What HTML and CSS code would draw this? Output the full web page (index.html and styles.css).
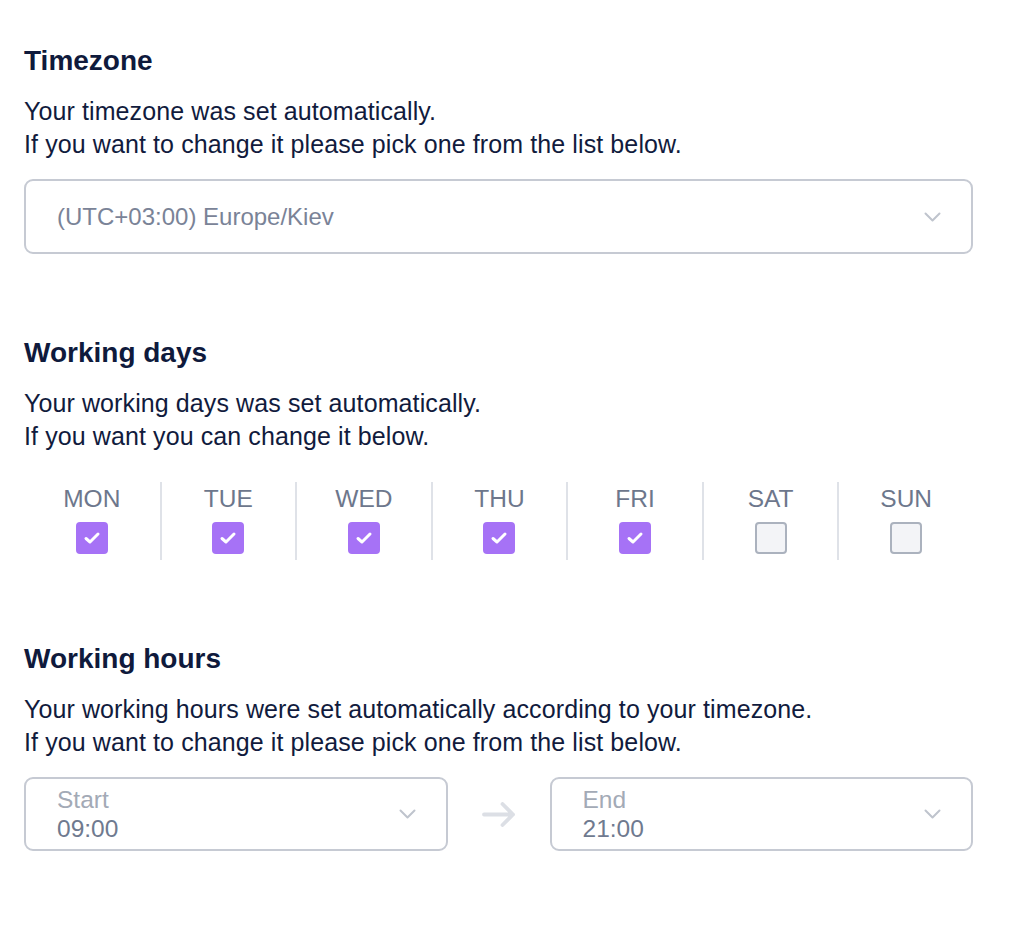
FILE: index.html
```html
<!DOCTYPE html>
<html lang="en">
<head>
<meta charset="utf-8">
<title>Settings</title>
<link rel="stylesheet" href="styles.css">
</head>
<body>
<main class="page">
  <section class="section">
    <h2 class="title">Timezone</h2>
    <p class="desc">Your timezone was set automatically.<br>If you want to change it please pick one from the list below.</p>
    <div class="select select-tz">
      <span class="select-value">(UTC+03:00) Europe/Kiev</span>
      <svg class="chev" width="17" height="10" viewBox="0 0 17 10"><path d="M1.5 1.5 L8.5 8.5 L15.5 1.5" fill="none" stroke="#bfc4cd" stroke-width="2" stroke-linecap="round" stroke-linejoin="round"/></svg>
    </div>
  </section>

  <section class="section">
    <h2 class="title">Working days</h2>
    <p class="desc">Your working days was set automatically.<br>If you want you can change it below.</p>
    <div class="days">
      <div class="day"><span class="day-name">MON</span><span class="cb on"><svg width="18" height="14" viewBox="0 0 18 14"><path d="M3 7.5 L7 11 L15 3" fill="none" stroke="#fff" stroke-width="3" stroke-linecap="round" stroke-linejoin="round"/></svg></span></div>
      <div class="day"><span class="day-name">TUE</span><span class="cb on"><svg width="18" height="14" viewBox="0 0 18 14"><path d="M3 7.5 L7 11 L15 3" fill="none" stroke="#fff" stroke-width="3" stroke-linecap="round" stroke-linejoin="round"/></svg></span></div>
      <div class="day"><span class="day-name">WED</span><span class="cb on"><svg width="18" height="14" viewBox="0 0 18 14"><path d="M3 7.5 L7 11 L15 3" fill="none" stroke="#fff" stroke-width="3" stroke-linecap="round" stroke-linejoin="round"/></svg></span></div>
      <div class="day"><span class="day-name">THU</span><span class="cb on"><svg width="18" height="14" viewBox="0 0 18 14"><path d="M3 7.5 L7 11 L15 3" fill="none" stroke="#fff" stroke-width="3" stroke-linecap="round" stroke-linejoin="round"/></svg></span></div>
      <div class="day"><span class="day-name">FRI</span><span class="cb on"><svg width="18" height="14" viewBox="0 0 18 14"><path d="M3 7.5 L7 11 L15 3" fill="none" stroke="#fff" stroke-width="3" stroke-linecap="round" stroke-linejoin="round"/></svg></span></div>
      <div class="day"><span class="day-name">SAT</span><span class="cb off"></span></div>
      <div class="day"><span class="day-name">SUN</span><span class="cb off"></span></div>
    </div>
  </section>

  <section class="section">
    <h2 class="title">Working hours</h2>
    <p class="desc">Your working hours were set automatically according to your timezone.<br>If you want to change it please pick one from the list below.</p>
    <div class="hours">
      <div class="select select-time">
        <div class="time-text"><span class="time-label">Start</span><span class="time-value">09:00</span></div>
        <svg class="chev" width="17" height="10" viewBox="0 0 17 10"><path d="M1.5 1.5 L8.5 8.5 L15.5 1.5" fill="none" stroke="#bfc4cd" stroke-width="2" stroke-linecap="round" stroke-linejoin="round"/></svg>
      </div>
      <div class="arrow">
        <svg width="34" height="25" viewBox="0 0 34 25"><path d="M2 12.5 H31 M20.5 2 L31 12.5 L20.5 23" fill="none" stroke="#dcdfe5" stroke-width="3.8" stroke-linecap="round" stroke-linejoin="round"/></svg>
      </div>
      <div class="select select-time">
        <div class="time-text"><span class="time-label">End</span><span class="time-value">21:00</span></div>
        <svg class="chev" width="17" height="10" viewBox="0 0 17 10"><path d="M1.5 1.5 L8.5 8.5 L15.5 1.5" fill="none" stroke="#bfc4cd" stroke-width="2" stroke-linecap="round" stroke-linejoin="round"/></svg>
      </div>
    </div>
  </section>
</main>
</body>
</html>
```

FILE: styles.css
```css
* { box-sizing: border-box; }

html, body {
  margin: 0;
  padding: 0;
  background: #ffffff;
}

body {
  font-family: "Liberation Sans", Arial, sans-serif;
  color: #111b3d;
}

.page {
  width: 949px;
  margin-left: 24px;
  padding-top: 44px;
}

.section {
  margin-bottom: 82px;
}

.title {
  margin: 0;
  font-size: 28px;
  line-height: 34px;
  font-weight: 700;
  color: #0f1a3c;
}

.desc {
  margin: 17px 0 0;
  font-size: 25px;
  letter-spacing: 0.1px;
  line-height: 33px;
  color: #111b3d;
}

.select {
  display: flex;
  align-items: center;
  justify-content: space-between;
  height: 75px;
  border: 2px solid #c6cad3;
  border-radius: 9px;
  background: #fff;
}

.select-tz {
  margin-top: 18px;
  padding: 0 30px 0 31px;
}

.select-value {
  font-size: 24px;
  color: #7a8397;
}

.days {
  margin-top: 29px;
  display: grid;
  grid-template-columns: repeat(7, 1fr);
  height: 78px;
}

.day {
  display: flex;
  flex-direction: column;
  align-items: center;
  padding-top: 3px;
}

.day + .day {
  border-left: 2px solid #dfe2e8;
}

.day-name {
  font-size: 24.5px;
  line-height: 28px;
  color: #6d778c;
}

.cb {
  margin-top: 9px;
  width: 32px;
  height: 32px;
  border-radius: 4px;
  display: flex;
  align-items: center;
  justify-content: center;
}

.cb.on {
  background: #a672f6;
}

.cb.off {
  background: #f3f4f7;
  border: 2px solid #abb2be;
}

.hours {
  margin-top: 18px;
  display: flex;
  align-items: center;
}

.select-time {
  flex: 1;
  height: 74px;
  padding: 0 30px 0 31px;
}

.time-text {
  display: flex;
  flex-direction: column;
}

.time-label {
  font-size: 24.5px;
  line-height: 29px;
  color: #a3aab6;
}

.time-value {
  font-size: 24.5px;
  line-height: 29px;
  color: #6f7a8f;
}

.arrow {
  width: 102px;
  display: flex;
  justify-content: center;
  align-items: center;
}
```
